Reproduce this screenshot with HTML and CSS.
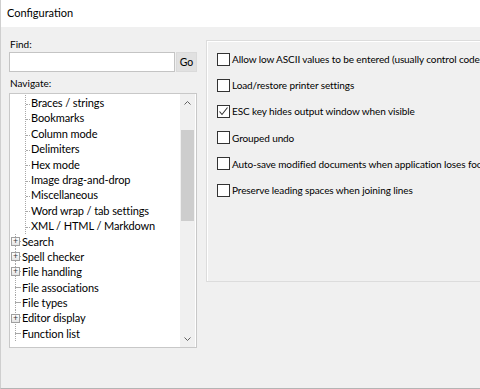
FILE: index.html
```html
<!DOCTYPE html>
<html lang="en">
<head>
    <meta charset="UTF-8">
    <title>Configuration</title>
    <link rel="stylesheet" href="styles.css">
</head>
<body>
    <div class="window">
        <div class="titlebar">Configuration</div>

        <div class="dialog">
            <div class="nav-column">
                <label class="field-label" for="find">Find:</label>
                <div class="find-row">
                    <input type="text" id="find" class="find-input">
                    <button class="go-btn">Go</button>
                </div>

                <div class="field-label nav-label">Navigate:</div>
                <div class="tree">
                    <div class="tree-items">
                        <div class="tree-group">
                            <div class="tree-leaf">Braces / strings</div>
                            <div class="tree-leaf">Bookmarks</div>
                            <div class="tree-leaf">Column mode</div>
                            <div class="tree-leaf">Delimiters</div>
                            <div class="tree-leaf">Hex mode</div>
                            <div class="tree-leaf">Image drag-and-drop</div>
                            <div class="tree-leaf">Miscellaneous</div>
                            <div class="tree-leaf">Word wrap / tab settings</div>
                            <div class="tree-leaf last">XML / HTML / Markdown</div>
                        </div>
                        <div class="tree-node"><span class="twig"><span class="expander">+</span></span>Search</div>
                        <div class="tree-node"><span class="twig"><span class="expander">+</span></span>Spell checker</div>
                        <div class="tree-node"><span class="twig"><span class="expander">+</span></span>File handling</div>
                        <div class="tree-node"><span class="twig"></span>File associations</div>
                        <div class="tree-node"><span class="twig"></span>File types</div>
                        <div class="tree-node"><span class="twig"><span class="expander">+</span></span>Editor display</div>
                        <div class="tree-node"><span class="twig"></span>Function list</div>
                    </div>
                    <div class="scrollbar">
                        <div class="scroll-btn">
                            <svg width="7" height="4" viewBox="0 0 7 4"><path d="M0.5 3.5 L3.5 0.5 L6.5 3.5" fill="none" stroke="#606060" stroke-width="1"/></svg>
                        </div>
                        <div class="scroll-track">
                            <div class="scroll-thumb"></div>
                        </div>
                        <div class="scroll-btn">
                            <svg width="7" height="4" viewBox="0 0 7 4"><path d="M0.5 0.5 L3.5 3.5 L6.5 0.5" fill="none" stroke="#606060" stroke-width="1"/></svg>
                        </div>
                    </div>
                </div>
            </div>

            <div class="options-panel">
                <label class="option"><span class="checkbox"></span>Allow low ASCII values to be entered (usually control codes)</label>
                <label class="option"><span class="checkbox"></span>Load/restore printer settings</label>
                <label class="option"><span class="checkbox checked">
                    <svg width="11" height="11" viewBox="0 0 11 11"><path d="M1.5 5.5 L4 8.5 L9.5 1.5" fill="none" stroke="#333" stroke-width="1.1"/></svg>
                </span>ESC key hides output window when visible</label>
                <label class="option"><span class="checkbox"></span>Grouped undo</label>
                <label class="option"><span class="checkbox"></span>Auto-save modified documents when application loses focus</label>
                <label class="option"><span class="checkbox"></span>Preserve leading spaces when joining lines</label>
            </div>
        </div>
    </div>
</body>
</html>
```

FILE: styles.css
```css
* {
    margin: 0;
    padding: 0;
    box-sizing: border-box;
}

body {
    font-family: Lato, "Noto Sans", sans-serif;
    font-size: 12px;
    color: #000;
    background: #f0f0f0;
    width: 480px;
    height: 389px;
    overflow: hidden;
}

.window {
    width: 520px;
    height: 389px;
    border-left: 1px solid #cfcfcf;
    border-bottom: 1px solid #b4b4b4;
    background: #f0f0f0;
    display: flex;
    flex-direction: column;
}

.titlebar {
    height: 27px;
    background: #fff;
    padding: 5px 0 0 6px;
    font-size: 11px;
    line-height: 16px;
}

.dialog {
    flex: 1;
    display: flex;
    align-items: flex-start;
    padding: 9px 0 0 8px;
}

/* left side: search + tree */
.nav-column {
    width: 188px;
    display: flex;
    flex-direction: column;
}

.field-label {
    display: block;
    padding-left: 1px;
    font-size: 10px;
    line-height: 16px;
    height: 16px;
}

.find-row {
    display: flex;
    gap: 1px;
    height: 20px;
}

.find-input {
    width: 166px;
    height: 20px;
    border: 1px solid #c4c4c4;
    background: #fff;
    outline: none;
}

.go-btn {
    width: 21px;
    height: 20px;
    border: 1px solid #dadada;
    background: #e1e1e1;
    font-family: inherit;
    font-size: 10.5px;
    color: #000;
}

.nav-label {
    margin-top: 3px;
}

.tree {
    margin-top: 2px;
    height: 255px;
    display: flex;
    border: 1px solid #c8c8c8;
    background: #fff;
}

.tree-items {
    flex: 1;
    overflow: hidden;
    padding-top: 1px;
    font-size: 11px;
    letter-spacing: -0.1px;
    line-height: 15.4px;
}

.tree-group {
    margin-left: 15px;
    border-left: 1px dotted #a8a8a8;
}

.tree-leaf {
    white-space: nowrap;
    height: 15.4px;
}

.tree-leaf::before {
    content: "";
    display: inline-block;
    width: 4px;
    margin-right: 1px;
    vertical-align: middle;
    border-top: 1px dotted #a8a8a8;
}

.tree-node {
    display: flex;
    align-items: center;
    height: 15.4px;
    white-space: nowrap;
}

.twig {
    width: 12px;
    height: 15.4px;
    display: flex;
    align-items: center;
    justify-content: center;
    background:
        linear-gradient(#a8a8a8, #a8a8a8) 5px 7px / 6px 1px no-repeat,
        repeating-linear-gradient(to bottom, #a8a8a8 0 1px, transparent 1px 2px) 5px 0 / 1px 100% no-repeat;
}

.expander {
    width: 9px;
    height: 9px;
    border: 1px solid #a0a0a0;
    background: linear-gradient(#fff, #e4e4e4);
    font-family: "Noto Sans", sans-serif;
    font-size: 9px;
    line-height: 6px;
    text-align: center;
    color: #3a3a3a;
    margin-left: -1px;
}

/* scrollbar */
.scrollbar {
    width: 15px;
    margin-right: 1px;
    display: flex;
    flex-direction: column;
    background: #f0f0f0;
}

.scroll-btn {
    height: 17px;
    display: flex;
    align-items: center;
    justify-content: center;
}

.scroll-track {
    flex: 1;
    padding: 19px 1px 0;
}

.scroll-thumb {
    height: 91px;
    background: #cdcdcd;
}

/* right side: options */
.options-panel {
    margin-left: 9px;
    margin-top: 4px;
    flex: 1;
    height: 242px;
    border: 1px solid #dcdcdc;
    box-shadow: inset 1px 1px 0 #fff;
    padding: 5px 0 0 10px;
    display: flex;
    flex-direction: column;
}

.option {
    display: flex;
    align-items: center;
    height: 26.2px;
    font-size: 10px;
    letter-spacing: -0.1px;
    white-space: nowrap;
}

.checkbox {
    width: 13px;
    height: 13px;
    border: 1px solid #333;
    background: #fff;
    margin-right: 2px;
    flex-shrink: 0;
    display: flex;
    align-items: center;
    justify-content: center;
}
```
